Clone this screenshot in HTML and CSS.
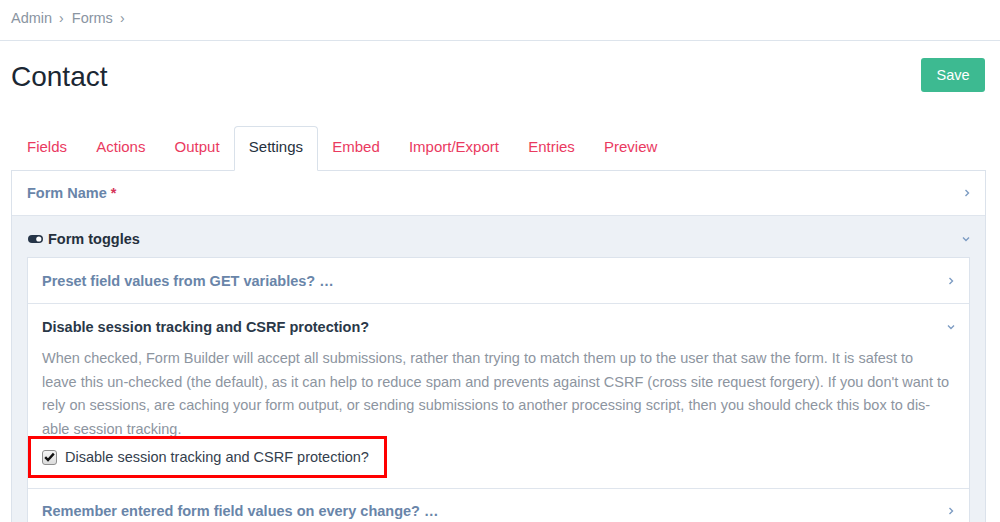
FILE: index.html
```html
<!DOCTYPE html>
<html lang="en">
<head>
<meta charset="utf-8">
<title>Contact</title>
<link rel="stylesheet" href="styles.css">
</head>
<body>
<nav class="breadcrumb">
  <a href="#">Admin</a><span class="sep">›</span><a href="#">Forms</a><span class="sep">›</span>
</nav>
<header class="page-head">
  <h1>Contact</h1>
  <button class="btn-save">Save</button>
</header>
<ul class="tabs">
  <li><a href="#">Fields</a></li>
  <li><a href="#">Actions</a></li>
  <li><a href="#">Output</a></li>
  <li class="active"><a href="#">Settings</a></li>
  <li><a href="#">Embed</a></li>
  <li><a href="#">Import/Export</a></li>
  <li><a href="#">Entries</a></li>
  <li><a href="#">Preview</a></li>
</ul>
<div class="panel">
  <div class="row">
    <span class="row-title">Form Name <span class="req">*</span></span>
    <svg class="chev" width="8" height="8" viewBox="0 0 8 8"><polyline points="2.5,1 5.5,4 2.5,7" fill="none" stroke="#7d9cc3" stroke-width="1.4"/></svg>
  </div>
  <div class="section">
    <div class="section-head">
      <span class="section-title">
        <svg class="toggle-ico" width="15" height="8" viewBox="0 0 15 8"><rect x="0" y="0" width="15" height="8" rx="4" fill="#263548"/><circle cx="10.8" cy="4" r="2.6" fill="#fff"/></svg>
        Form toggles
      </span>
      <svg class="chev" width="8" height="8" viewBox="0 0 8 8"><polyline points="1,2.5 4,5.5 7,2.5" fill="none" stroke="#7d9cc3" stroke-width="1.4"/></svg>
    </div>
    <div class="inner">
      <div class="row sub">
        <span class="row-title">Preset field values from GET variables? …</span>
        <svg class="chev" width="8" height="8" viewBox="0 0 8 8"><polyline points="2.5,1 5.5,4 2.5,7" fill="none" stroke="#7d9cc3" stroke-width="1.4"/></svg>
      </div>
      <div class="row sub open">
        <div class="open-head">
          <span class="row-title dark">Disable session tracking and CSRF protection?</span>
          <svg class="chev" width="8" height="8" viewBox="0 0 8 8"><polyline points="1,2.5 4,5.5 7,2.5" fill="none" stroke="#7d9cc3" stroke-width="1.4"/></svg>
        </div>
        <p class="desc">When checked, Form Builder will accept all submissions, rather than trying to match them up to the user that saw the form. It is safest to<br>leave this un-checked (the default), as it can help to reduce spam and prevents against CSRF (cross site request forgery). If you don't want to<br>rely on sessions, are caching your form output, or sending submissions to another processing script, then you should check this box to dis-<br>able session tracking.</p>
        <label class="highlight">
          <span class="cbox"><svg width="11" height="10" viewBox="0 0 11 10"><polyline points="1.2,5.2 4,8 9.8,1.6" fill="none" stroke="#111" stroke-width="2.4"/></svg></span>
          <span class="cb-label">Disable session tracking and CSRF protection?</span>
        </label>
      </div>
      <div class="row sub">
        <span class="row-title">Remember entered form field values on every change? …</span>
        <svg class="chev" width="8" height="8" viewBox="0 0 8 8"><polyline points="2.5,1 5.5,4 2.5,7" fill="none" stroke="#7d9cc3" stroke-width="1.4"/></svg>
      </div>
    </div>
  </div>
</div>
</body>
</html>
```

FILE: styles.css
```css
* { box-sizing: border-box; }
html, body { margin: 0; padding: 0; background: #fff; }
body {
  font-family: "Liberation Sans", Arial, sans-serif;
  font-size: 14.5px;
  color: #2a3848;
  overflow: hidden;
}
a { text-decoration: none; color: inherit; }

.breadcrumb {
  padding: 8px 11px 12px;
  line-height: 20px;
  height: 41px;
  border-bottom: 1px solid #dde4ec;
  color: #8a95a2;
}
.breadcrumb .sep { margin: 0 8px 0 7px; font-size: 14px; }

.page-head {
  display: flex;
  justify-content: space-between;
  align-items: flex-start;
  padding: 17px 15px 0 11px;
}
.page-head h1 {
  margin: 0;
  padding-top: 1px;
  font-size: 28px;
  line-height: 35px;
  font-weight: normal;
  color: #1b2733;
}
.btn-save {
  width: 64px;
  height: 34px;
  border: 0;
  border-radius: 3px;
  background: #3dba91;
  color: #fff;
  font-family: inherit;
  font-size: 14.5px;
  padding: 0;
}

.tabs {
  list-style: none;
  margin: 32px 0 -1px 12px;
  padding: 0;
  display: flex;
}
.tabs li {
  border: 1px solid transparent;
  border-radius: 4px 4px 0 0;
  padding: 10px 13.6px 13px;
  line-height: 20px;
  font-size: 15px;
}
.tabs li:first-child { padding-left: 14px; }
.tabs li a { color: #ea3a5f; }
.tabs li.active {
  border-color: #d9e1ea;
  border-bottom-color: #fff;
  background: #fff;
  position: relative;
  z-index: 1;
}
.tabs li.active a { color: #26313d; }

.panel {
  margin: 0 14px 0 11px;
  border: 1px solid #dbe2eb;
  border-bottom: 0;
}
.row {
  display: flex;
  justify-content: space-between;
  align-items: center;
  padding: 12px 14px 12px 15px;
  line-height: 20px;
  background: #fff;
  border-bottom: 1px solid #dfe5ed;
}
.row-title { font-weight: bold; color: #6985a9; }
.row-title.dark { color: #2a3848; }
.req { color: #d6345a; }
.chev { display: block; flex: none; }

.section {
  background: #edf1f6;
  padding: 0 15px 0 15px;
}
.section-head {
  display: flex;
  justify-content: space-between;
  align-items: center;
  padding: 13px 0 8px 1px;
  line-height: 20px;
}
.section-title {
  display: flex;
  align-items: center;
  font-weight: bold;
  color: #25303d;
}
.toggle-ico { margin-right: 5px; }

.inner {
  border: 1px solid #dce3ec;
  border-bottom: 0;
  background: #fff;
}
.row.sub { padding: 13px 14px 12px 14px; }
.row.open + .row.sub { padding-top: 12px; }
.row.open {
  display: block;
  padding-bottom: 10px;
}
.open-head {
  display: flex;
  justify-content: space-between;
  align-items: center;
}
.desc {
  margin: 10px 0 0;
  line-height: 23.6px;
  color: #8d959f;
}
.highlight {
  display: inline-flex;
  align-items: center;
  margin: -5px 0 0 -14px;
  height: 42px;
  padding: 0 15px 0 11px;
  border: 3px solid #f00;
}
.cbox {
  width: 15px;
  height: 15px;
  border: 1px solid #8e8e8e;
  border-radius: 3px;
  background: linear-gradient(#f4f4f4, #dcdcdc);
  display: flex;
  align-items: center;
  justify-content: center;
  margin-right: 8px;
}
.cbox svg { display: block; }
.cb-label {
  font-size: 14.5px;
  color: #34404d;
}
```
